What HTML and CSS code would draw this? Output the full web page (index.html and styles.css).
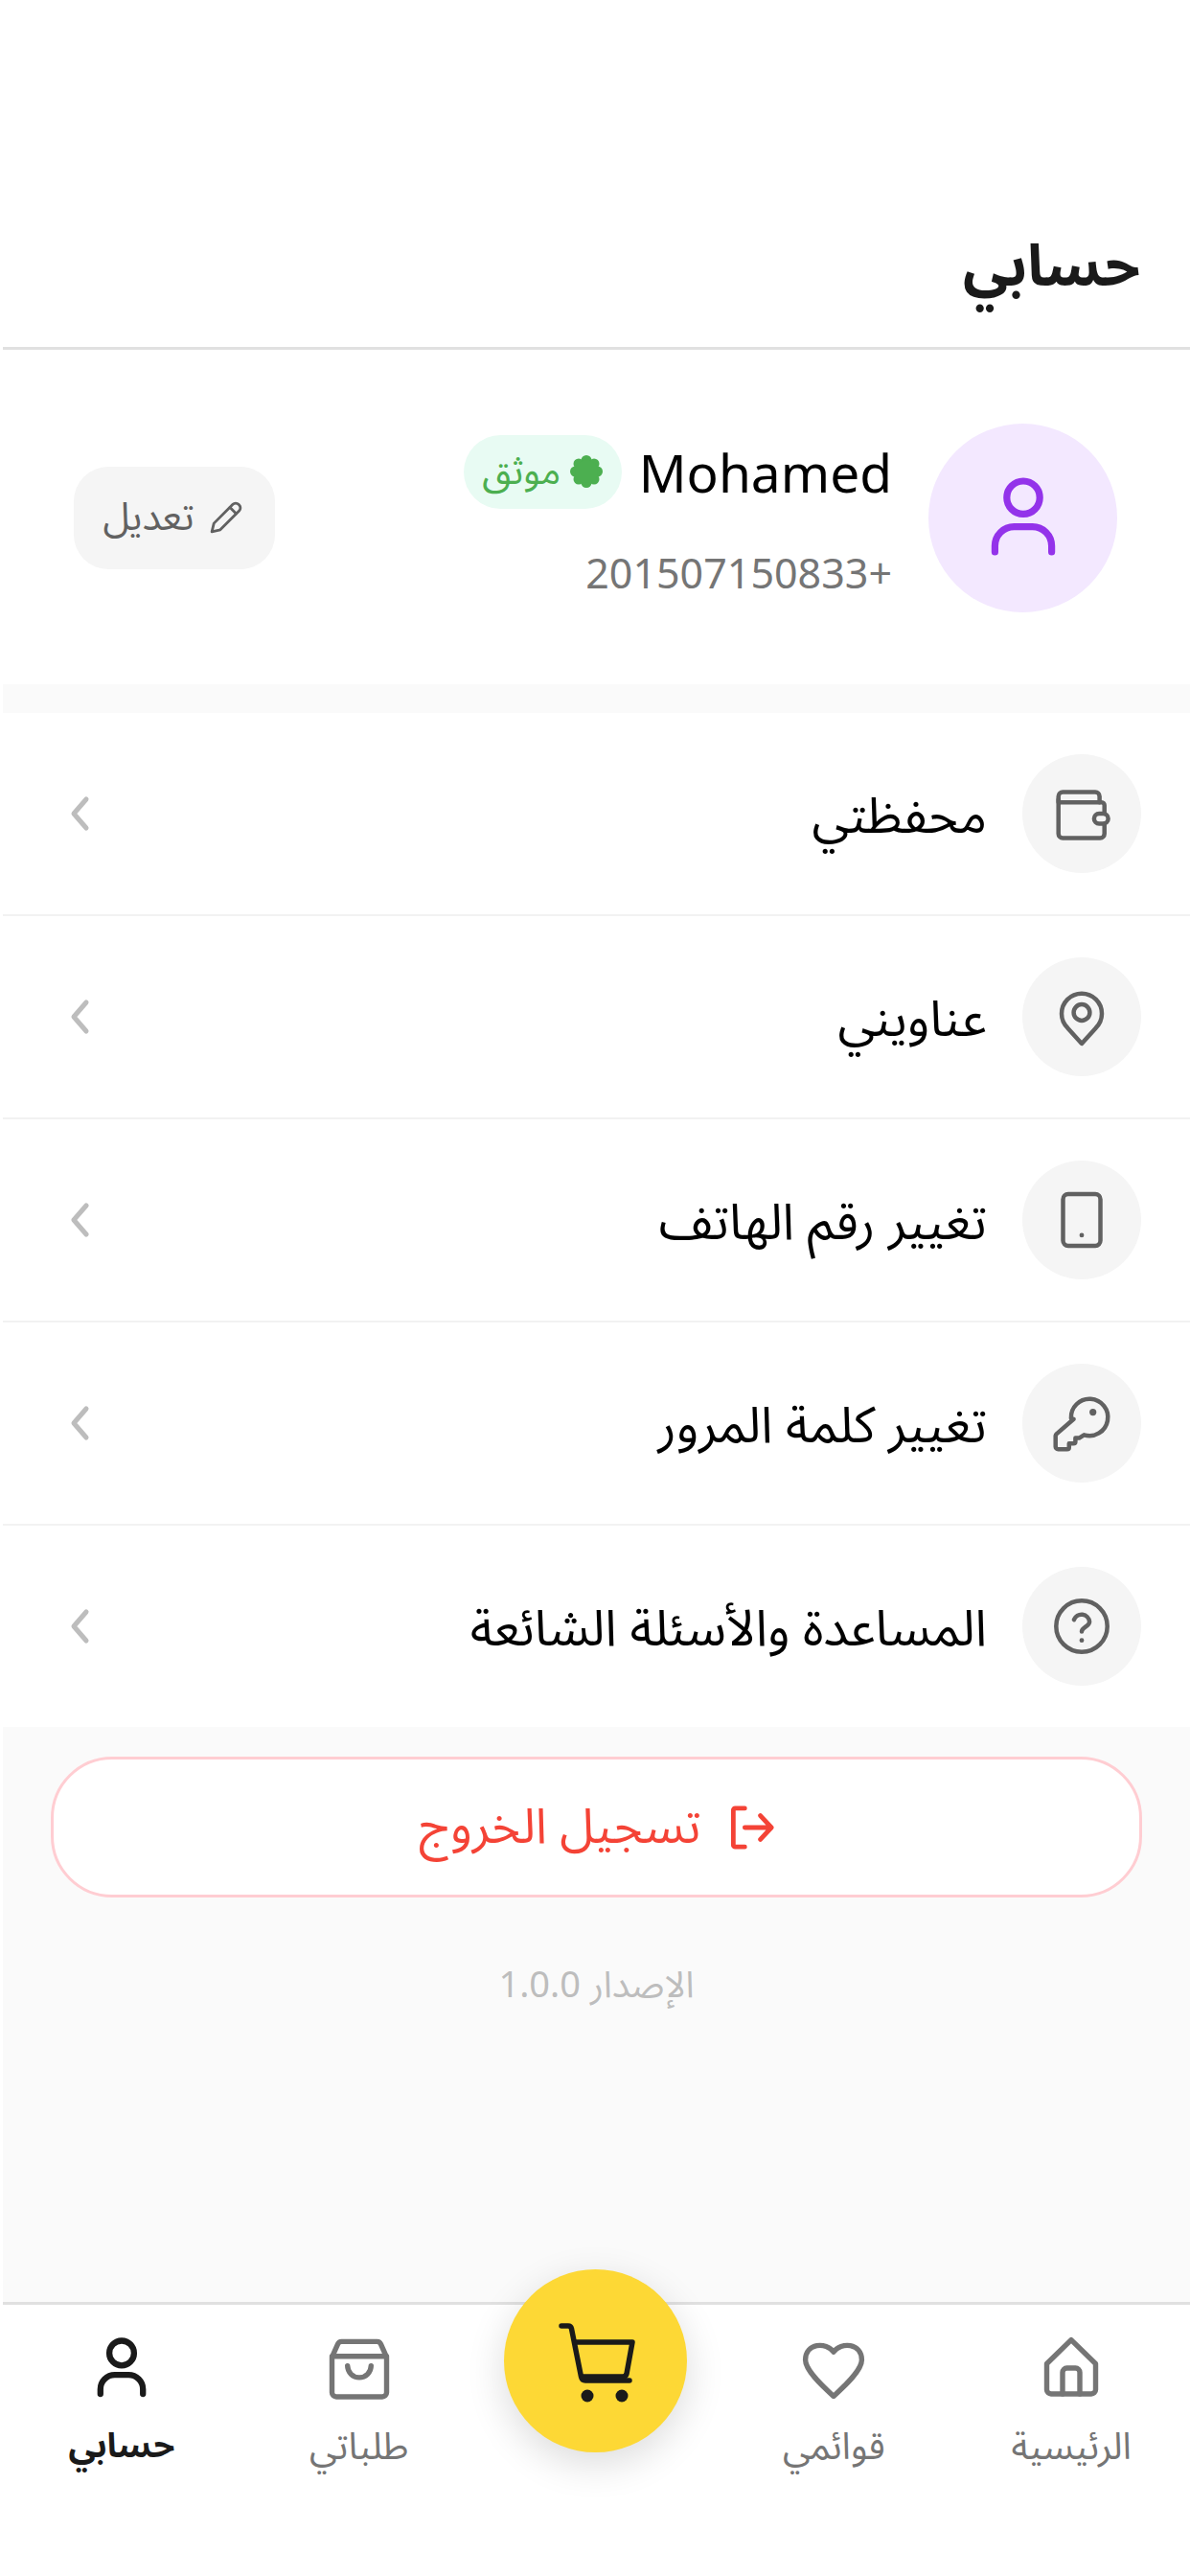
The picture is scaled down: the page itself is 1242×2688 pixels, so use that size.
FILE: index.html
```html
<!DOCTYPE html>
<html lang="ar" dir="rtl">
<head>
<meta charset="utf-8">
<title>حسابي</title>
<link rel="stylesheet" href="styles.css">
</head>
<body>
<div class="app">
  <header class="topbar"><h1 class="title">حسابي</h1></header>
  <section class="profile">
    <div class="avatar">
      <svg class="avatar-icon" viewBox="0 0 24 24"><circle cx="12" cy="6.800" r="4.300"/><path d="M4.600 21v-1.600a5 5 0 0 1 5-5h4.800a5 5 0 0 1 5 5V21"/></svg>
    </div>
    <div class="identity">
      <div class="name-line">
        <span class="name">Mohamed</span>
        <span class="badge">
          <svg class="rosette" viewBox="0 0 34 34"><circle cx="17" cy="5.500" r="5.500"/><circle cx="25" cy="9" r="5.500"/><circle cx="28.500" cy="17" r="5.500"/><circle cx="25" cy="25" r="5.500"/><circle cx="17" cy="28.500" r="5.500"/><circle cx="9" cy="25" r="5.500"/><circle cx="5.500" cy="17" r="5.500"/><circle cx="9" cy="9" r="5.500"/><circle cx="17" cy="17" r="12"/></svg>
          <span>موثق</span>
        </span>
      </div>
      <div class="phone">+201507150833</div>
    </div>
    <button class="edit">
      <svg class="edit-icon" viewBox="0 0 24 24"><path d="M3.500 20.500l1.200-5L16 4.200a2.400 2.400 0 0 1 3.400 0l.4.4a2.400 2.400 0 0 1 0 3.400L8.500 19.300z"/><path d="M14.300 6l3.700 3.700"/></svg>
      <span>تعديل</span>
    </button>
  </section>
  <div class="band"></div>
  <ul class="menu">
    <li class="row">
      <span class="row-icon"><svg viewBox="0 0 24 24"><path d="M3.900 8.100V6a1.500 1.500 0 0 1 1.500-1.500h11.300a1.500 1.500 0 0 1 1.500 1.500v2.100"/><path d="M3.900 8.100h15a1 1 0 0 1 1 1V12M3.900 7v12a1.500 1.500 0 0 0 1.500 1.500h13a1.500 1.500 0 0 0 1.500-1.500v-3.500"/><rect x="16.300" y="12" width="4.900" height="3.500" rx="1.750"/></svg></span>
      <span class="row-label">محفظتي</span>
      <svg class="chev" viewBox="0 0 24 40"><path d="M18 5L5 20l13 15"/></svg>
    </li>
    <li class="row">
      <span class="row-icon"><svg viewBox="0 0 24 24"><path d="M12 21.300l-4.900-5.400a7 7 0 1 1 9.800 0z"/><circle cx="12" cy="10.500" r="2.800"/></svg></span>
      <span class="row-label">عناويني</span>
      <svg class="chev" viewBox="0 0 24 40"><path d="M18 5L5 20l13 15"/></svg>
    </li>
    <li class="row">
      <span class="row-icon"><svg viewBox="0 0 24 24"><rect x="5.500" y="3" width="13" height="18" rx="1.800"/><circle class="fill" cx="12" cy="17.300" r=".8"/></svg></span>
      <span class="row-label">تغيير رقم الهاتف</span>
      <svg class="chev" viewBox="0 0 24 40"><path d="M18 5L5 20l13 15"/></svg>
    </li>
    <li class="row">
      <span class="row-icon"><svg viewBox="0 0 24 24"><path d="M9.200 10.600L3.300 15.700a.9.900 0 0 0-.4.700v3.800c0 .5.400.9.900.9h3.100c.4 0 .7-.3.700-.7v-1.300h1.500c.4 0 .7-.3.700-.7v-1.200h1.300l1.700-1.100a6.400 6.400 0 1 0-4.500-5.800z"/><circle class="fill" cx="15.900" cy="8.200" r="1.200"/></svg></span>
      <span class="row-label">تغيير كلمة المرور</span>
      <svg class="chev" viewBox="0 0 24 40"><path d="M18 5L5 20l13 15"/></svg>
    </li>
    <li class="row">
      <span class="row-icon"><svg viewBox="0 0 24 24"><circle cx="12" cy="12" r="8.900"/><path d="M9.300 9.700a2.800 2.800 0 0 1 5.400.7c0 1.600-2.700 2-2.700 3.400"/><circle class="fill" cx="12" cy="16.900" r=".8"/></svg></span>
      <span class="row-label">المساعدة والأسئلة الشائعة</span>
      <svg class="chev" viewBox="0 0 24 40"><path d="M18 5L5 20l13 15"/></svg>
    </li>
  </ul>
  <main class="lower">
    <button class="logout">
      <svg class="logout-icon" viewBox="0 0 48 48"><path d="M16 3H5.500a2 2 0 0 0-2 2v38a2 2 0 0 0 2 2H16"/><path d="M16 24h28M33 11l12 13-12 13"/></svg>
      <span>تسجيل الخروج</span>
    </button>
    <p class="version">الإصدار 1.0.0</p>
  </main>
  <nav class="nav">
    <a class="nav-item">
      <svg viewBox="0 0 24 24"><path d="M3.500 10.500L12 2.200l8.500 8.300v9a1.500 1.500 0 0 1-1.500 1.500H5a1.500 1.500 0 0 1-1.500-1.500z"/><path d="M9 21v-7.500a1.500 1.500 0 0 1 1.500-1.500h3a1.500 1.500 0 0 1 1.500 1.500V21"/></svg>
      <span>الرئيسية</span>
    </a>
    <a class="nav-item">
      <svg viewBox="0 0 24 24"><path d="M12 6.400C9.500 2.900 2.200 3.200 2.200 9.200c0 3.600 5.600 8.800 9.800 12.600 4.200-3.800 9.800-9 9.800-12.600 0-6-7.300-6.300-9.800-2.800z"/></svg>
      <span>قوائمي</span>
    </a>
    <div class="nav-gap"></div>
    <a class="nav-item">
      <svg viewBox="0 0 24 24"><path d="M2.500 8.200l2-4.500a1.500 1.500 0 0 1 1.400-.9h12.200a1.500 1.500 0 0 1 1.400.9l2 4.500v12.300a1.500 1.500 0 0 1-1.500 1.500H4a1.500 1.500 0 0 1-1.500-1.500zM2.500 7.900h19"/><path d="M7.900 11.200a4.100 4.100 0 0 0 8.200 0"/></svg>
      <span>طلباتي</span>
    </a>
    <a class="nav-item active">
      <svg viewBox="0 0 24 24"><circle cx="12" cy="6.800" r="4.300"/><path d="M4.600 21v-1.600a5 5 0 0 1 5-5h4.800a5 5 0 0 1 5 5V21"/></svg>
      <span>حسابي</span>
    </a>
    <div class="fab">
      <svg viewBox="0 0 96 96"><path d="M12 11h7c2 0 3 1 3.500 3l10 50c.5 2.500 2 4 4.500 4h46"/><path d="M26 28h60l-6 33c-.5 2-2 3-4 3H34"/><circle class="fill" cx="39" cy="84" r="6.500"/><circle class="fill" cx="75" cy="84" r="6.500"/></svg>
    </div>
  </nav>
</div>
</body>
</html>
```
FILE: styles.css
```css
* { box-sizing: border-box; }
html, body { margin: 0; padding: 0; background: #fff; }
body { font-family: "Noto Sans", "Noto Sans Arabic", "Noto Kufi Arabic", "DejaVu Sans", sans-serif; color: #000; }
svg { fill: none; stroke-linecap: round; stroke-linejoin: round; display: block; }
.fill { fill: currentColor; stroke: none; }

.app { width: 1242px; height: 2688px; padding-left: 3px; display: flex; flex-direction: column; position: relative; }

.topbar { height: 365px; flex: none; border-bottom: 3px solid #e0e0e0; padding: 234px 52px 0 0; }
.title { margin: 0; font-size: 60px; line-height: 82px; font-weight: 700; color: #1a1a1a; }

.profile { height: 349px; flex: none; display: flex; align-items: center; padding: 1px 76px 0 74px; }
.avatar { width: 197px; height: 197px; flex: none; border-radius: 50%; background: #f3e8ff; display: flex; align-items: center; justify-content: center; margin-left: 38px; }
.avatar-icon { width: 96px; height: 96px; stroke: #9333ea; stroke-width: 1.8; }
.identity { flex: 1; display: flex; flex-direction: column; gap: 38px; }
.name-line { display: flex; align-items: center; gap: 18px; }
.name { font-size: 55px; line-height: 77px; color: #000; }
.badge { height: 77px; width: 165px; border-radius: 39px; background: #e8fbf3; color: #4caf50; font-size: 39px; display: flex; align-items: center; justify-content: center; gap: 10px; }
.rosette { width: 34px; height: 34px; fill: #4caf50; }
.phone { font-size: 43px; line-height: 58px; color: #757575; }
.edit { width: 210px; height: 107px; flex: none; border: 0; border-radius: 36px; background: #f5f5f5; color: #616161; font: inherit; font-size: 40px; display: flex; align-items: center; justify-content: center; gap: 12px; padding: 0; }
.edit-icon { width: 42px; height: 42px; stroke: #616161; stroke-width: 1.6; }

.band { height: 30px; flex: none; background: #fafafa; }

.menu { list-style: none; margin: 0; padding: 0; flex: none; }
.row { height: 212px; display: flex; align-items: center; padding: 0 51px 0 69px; border-bottom: 2px solid #f2f2f2; }
.row:last-child { height: 210px; border-bottom: 0; }
.row-icon { width: 124px; height: 124px; flex: none; border-radius: 50%; background: #f5f5f5; color: #616161; display: flex; align-items: center; justify-content: center; margin-left: 37px; }
.row-icon svg { width: 72px; height: 72px; stroke: #616161; stroke-width: 1.5; }
.row-label { flex: 1; font-size: 52.500px; line-height: 66px; color: #000; }
.chev { width: 24px; height: 40px; flex: none; stroke: #bdbdbd; stroke-width: 5; }

.lower { flex: 1; background: #fafafa; padding: 31px 50px 0 50px; display: flex; flex-direction: column; align-items: stretch; }
.logout { height: 147px; flex: none; border: 3px solid #ffcdd2; border-radius: 64px; background: #fff; color: #f44336; font: inherit; font-size: 51px; display: flex; align-items: center; justify-content: center; gap: 30px; padding: 0; }
.logout-icon { width: 46px; height: 46px; stroke: #f44336; stroke-width: 5; }
.version { margin: 64px 0 0; text-align: center; font-size: 38px; line-height: 50px; color: #bdbdbd; }

.nav { height: 286px; flex: none; background: #fff; border-top: 3px solid #e0e0e0; display: grid; grid-template-columns: repeat(5, 1fr); position: relative; }
.nav-item { display: flex; flex-direction: column; align-items: center; padding-top: 30px; color: #757575; font-size: 39px; line-height: 50px; gap: 19px; }
.nav-item svg { width: 72px; height: 72px; stroke: #757575; stroke-width: 1.8; }
.nav-item.active { color: #1a1a1a; font-weight: 700; font-size: 36px; }
.nav-item.active svg { stroke: #1a1a1a; stroke-width: 2.1; }
.fab { position: absolute; top: -37px; left: 523px; width: 191px; height: 191px; border-radius: 50%; background: #fdd835; color: #1a1a1a; display: flex; align-items: center; justify-content: center; box-shadow: 0 12px 40px rgba(0, 0, 0, .14); }
.fab svg { width: 96px; height: 96px; stroke: #1a1a1a; stroke-width: 5.500; }
```
